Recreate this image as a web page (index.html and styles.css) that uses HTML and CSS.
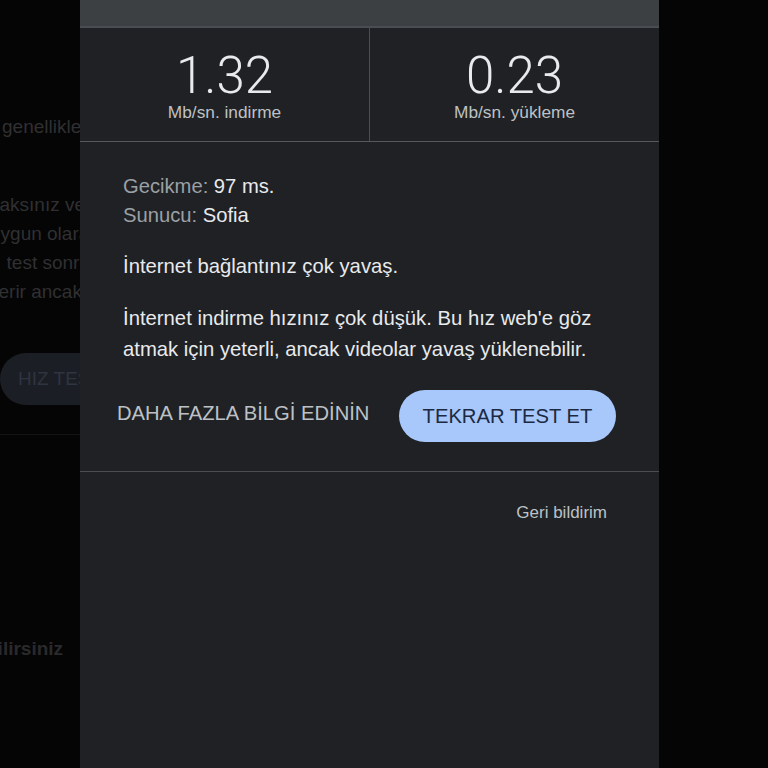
FILE: index.html
```html
<!DOCTYPE html>
<html lang="tr">
<head>
    <meta charset="UTF-8">
    <title>Hız testi</title>
    <link rel="stylesheet" href="styles.css">
</head>
<body>
    <!-- arkadaki sayfa (karartılmış) -->
    <div class="page">
        <p class="bg-line first">genellikle ile</p>
        <div class="bg-text">
            <p class="bg-line cut1">yaksınız ve</p>
            <p class="bg-line cut2">uygun olarak</p>
            <p class="bg-line cut3">ı test sonra</p>
            <p class="bg-line cut4">verir ancak</p>
        </div>
        <div class="bg-pill">HIZ TESTİ</div>
        <hr class="bg-rule">
        <p class="bg-line bold">bilirsiniz</p>
    </div>

    <!-- hız testi sonuç penceresi -->
    <div class="dialog">
        <div class="topbar"></div>

        <div class="stats">
            <div class="stat">
                <div class="num">1.32</div>
                <div class="unit">Mb/sn. indirme</div>
            </div>
            <div class="stat">
                <div class="num">0.23</div>
                <div class="unit">Mb/sn. yükleme</div>
            </div>
        </div>

        <div class="result">
            <div class="meta">
                <div><span class="label">Gecikme:</span> 97 ms.</div>
                <div><span class="label">Sunucu:</span> Sofia</div>
            </div>
            <p class="msg">İnternet bağlantınız çok yavaş.</p>
            <p class="msg">İnternet indirme hızınız çok düşük. Bu hız web'e göz atmak için yeterli, ancak videolar yavaş yüklenebilir.</p>

            <div class="actions">
                <a href="#" class="more">DAHA FAZLA BİLGİ EDİNİN</a>
                <button class="retest">TEKRAR TEST ET</button>
            </div>
        </div>

        <div class="foot">
            <a href="#">Geri bildirim</a>
        </div>
    </div>

    <div class="side"></div>
</body>
</html>
```

FILE: styles.css
```css
html,body{
    margin: 0; padding: 0;
}
body{
    width: 768px; height: 768px;
    overflow: hidden;
    display: flex;
    background-color: #050505;
    font-family: "Liberation Sans", Arial, sans-serif;
}

/* 뒤 페이지 - 어둡게 */
.page{
    width: 80px; flex: none;
    overflow: hidden;
    padding-top: 112px;
    box-sizing: border-box;
    color: #303032;
    font-size: 19px;
}
.bg-line{
    margin: 0; white-space: nowrap;
    line-height: 29px;
}
.first{ margin-left: 2px; }
.bg-text{ margin-top: 49px; }
.cut1{ margin-left: -10px; }
.cut2{ margin-left: -10px; }
.cut3{ margin-left: -4px; }
.cut4{ margin-left: -11px; }
.bg-pill{
    margin-top: 47px; margin-left: 0;
    width: 120px; height: 52px;
    border-radius: 26px;
    background-color: #1b1e24;
    color: #2e3440;
    line-height: 52px;
    padding-left: 18px;
    white-space: nowrap;
    box-sizing: border-box;
}
.bg-rule{
    margin: 29px 0 0; border: none;
    border-top: 1px solid #131313;
}
.bold{
    margin-top: 199px; margin-left: -14px;
    font-weight: bold; color: #2a2a2c;
}

/* 결과 창 */
.dialog{
    width: 579px; flex: none;
    background-color: #202124;
    display: flex; flex-direction: column;
}
.topbar{
    height: 26px;
    background-color: #3c4043;
    border-bottom: 2px solid #4a4d51;
}
.stats{
    display: flex;
    height: 113px;
    border-bottom: 1px solid #55585c;
}
.stat{
    flex: 1;
    text-align: center;
    padding-top: 23px;
}
.stat+.stat{
    border-left: 1px solid #4a4d51;
}
.num{
    font-family: Roboto, sans-serif; font-weight: 300;
    font-size: 51px; line-height: 50px;
    color: #e8eaed;
}
.unit{
    margin-top: 1px;
    font-size: 17.3px; line-height: 20px;
    color: #bdc1c6;
}

.result{
    padding: 30px 43px 29px;
    border-bottom: 1px solid #4a4d51;
    color: #e8eaed;
}
.meta{
    font-size: 20.2px; line-height: 29px;
}
.label{ color: #9aa0a6; }
.msg{
    margin: 21px 0 0;
    font-size: 20.3px; line-height: 31px;
}
.actions{
    margin-top: 25px;
    display: flex; align-items: center;
    justify-content: space-between;
}
.more{
    margin-left: -6px; margin-top: -6px;
    color: #bdc1c6; text-decoration: none;
    font-size: 20.2px;
}
.retest{
    width: 217px; height: 52px;
    border: none; border-radius: 26px;
    background-color: #a8c7fa;
    color: #1b2a42;
    font-family: inherit; font-size: 20.2px;
    cursor: pointer;
}

.foot{
    text-align: right;
    padding: 31px 52px 0 0;
}
.foot a{
    color: #bdc1c6; text-decoration: none;
    font-size: 17px;
}

.side{
    flex: 1;
    background-color: #050505;
}
```
